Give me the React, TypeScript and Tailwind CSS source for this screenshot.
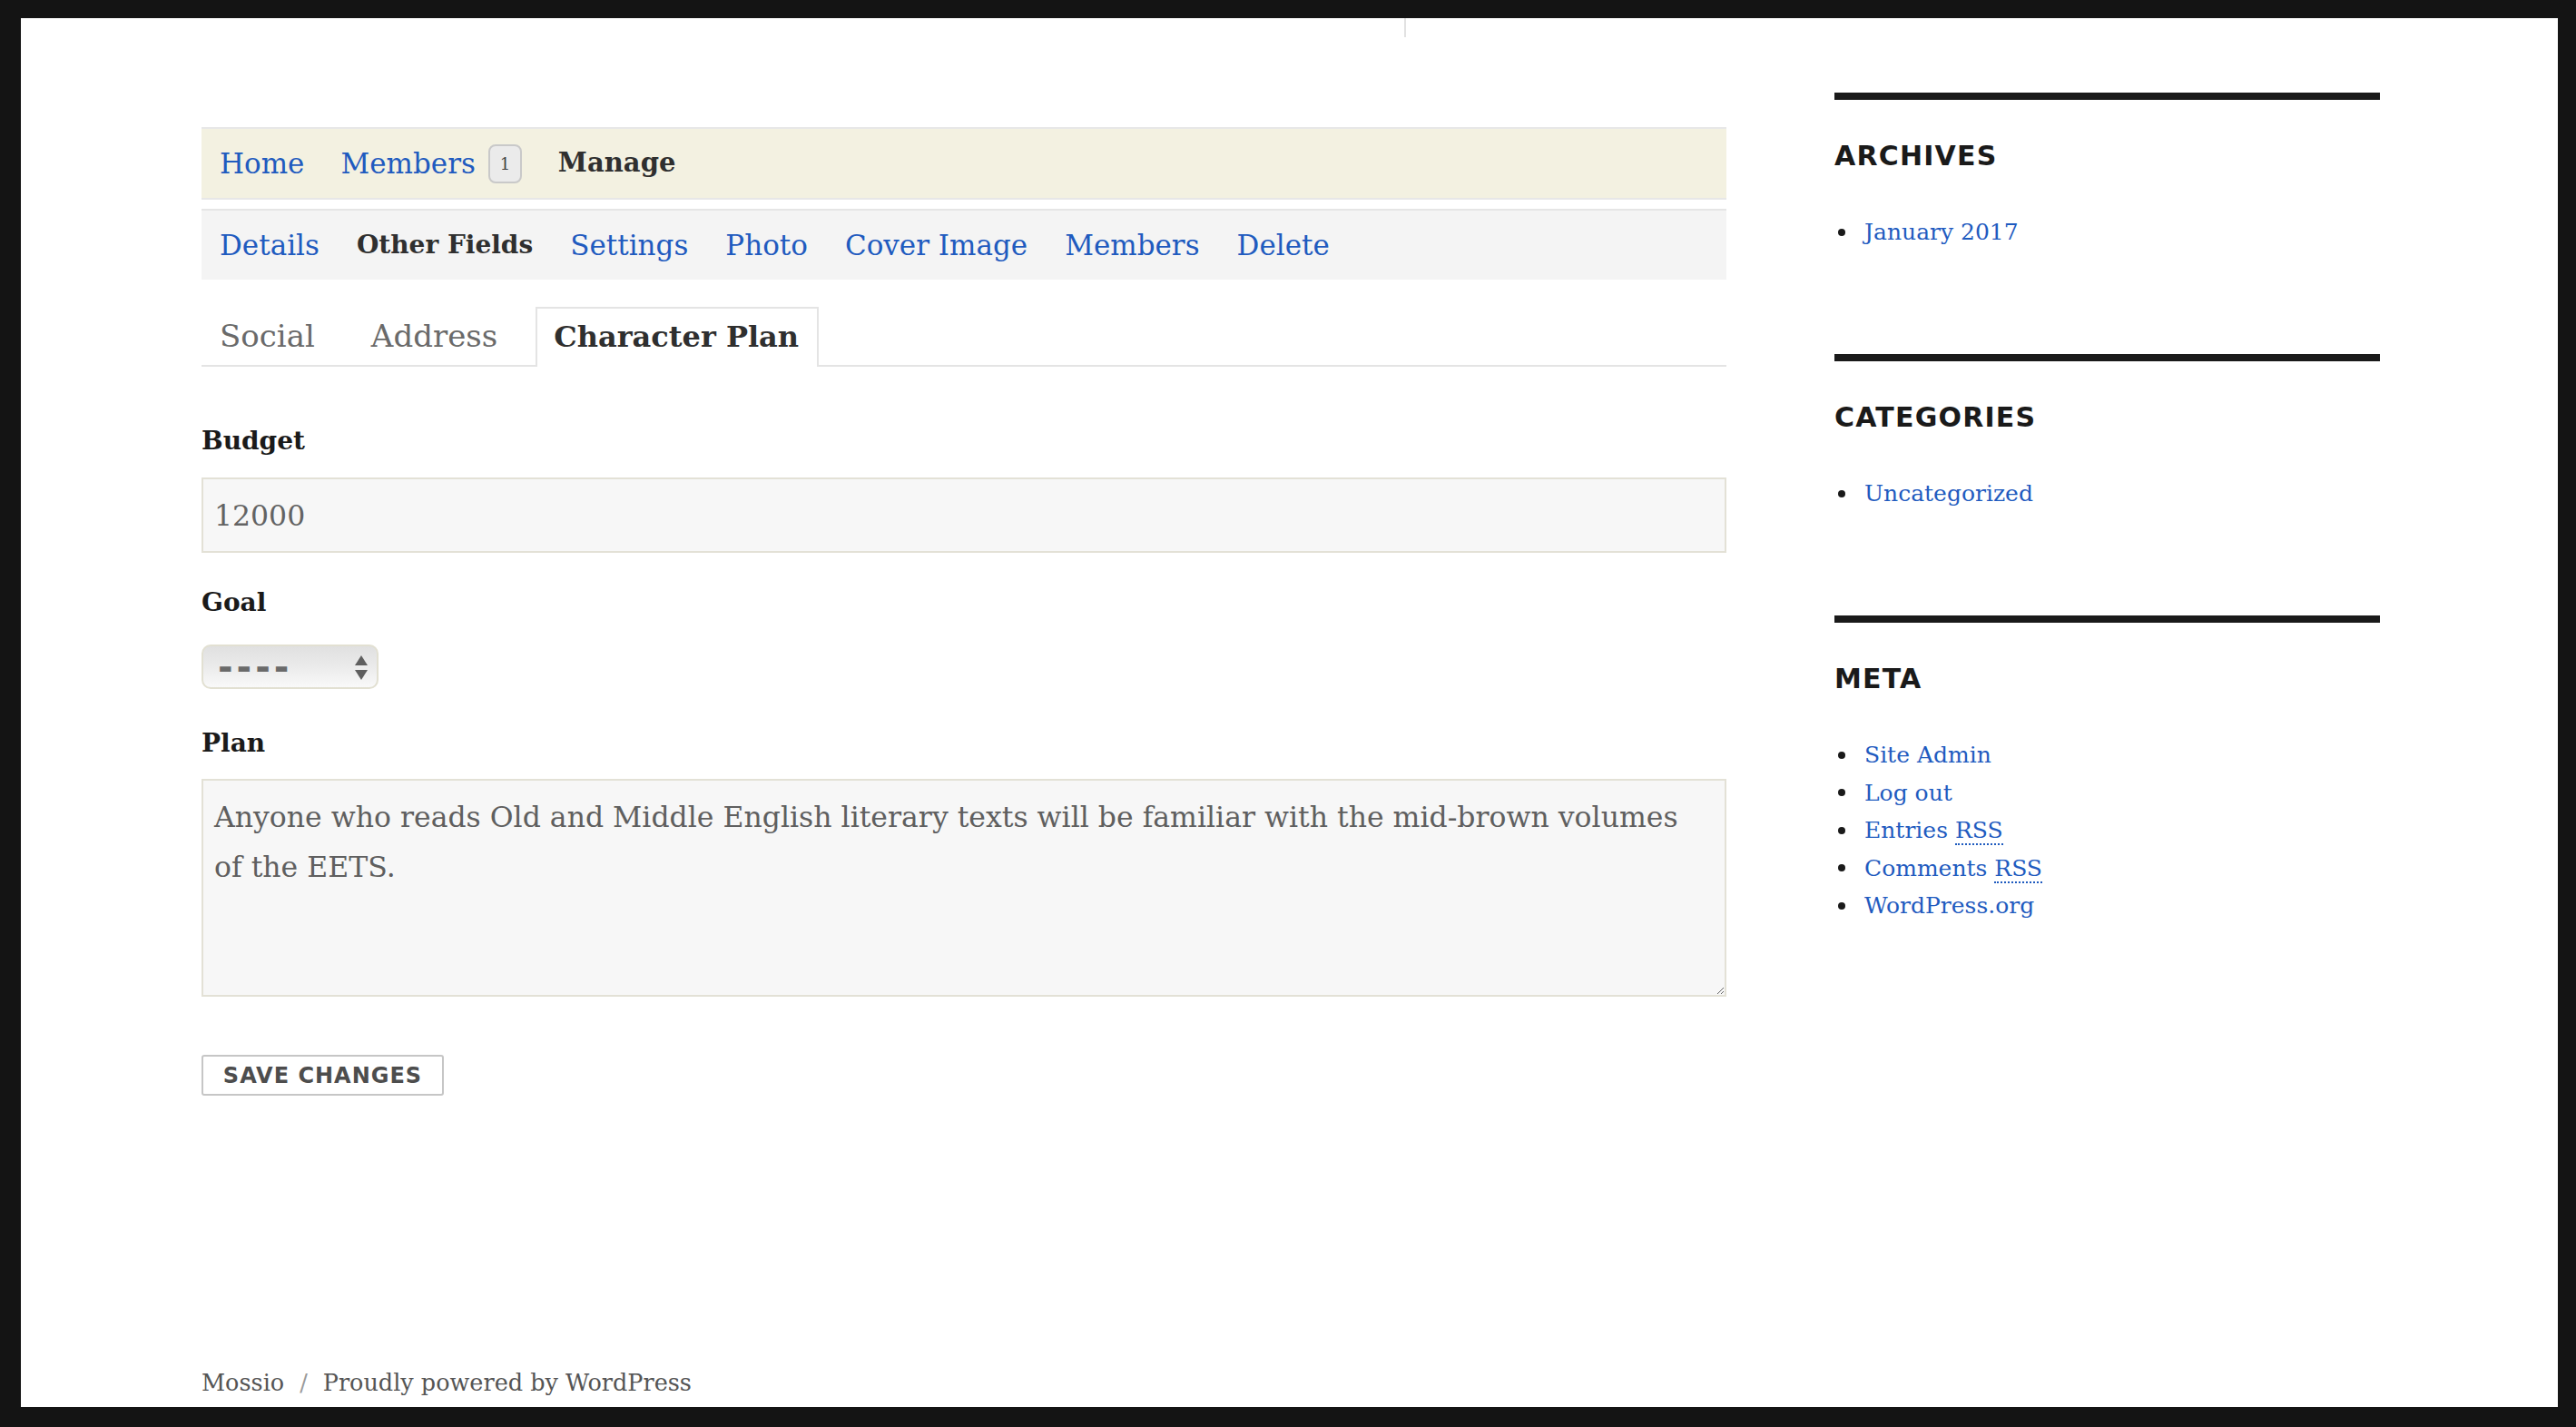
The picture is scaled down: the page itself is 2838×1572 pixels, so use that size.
import React from "react";

const blue = "text-[#1f5bbf]";

function Widget({ title, children, last }: { title: string; children: React.ReactNode; last?: boolean }) {
  return (
    <section className={last ? "" : "mb-[113.5px]"}>
      <div className="h-[8px] bg-[#1a1a1a]" />
      <h2 className="mt-[42px] h-[40px] leading-[40px] font-['DejaVu_Sans',sans-serif] font-bold text-[30px] tracking-[1.2px] text-[#1a1a1a] uppercase">
        {title}
      </h2>
      <ul className="mt-[43px]">{children}</ul>
    </section>
  );
}

function Item({ children }: { children: React.ReactNode }) {
  return (
    <li className="h-[41.5px] leading-[41.5px] flex items-center text-[25px]">
      <span className="ml-[4px] mr-[21px] w-[8px] h-[8px] rounded-full bg-[#1a1a1a] shrink-0" />
      <a className={blue} href="#">
        {children}
      </a>
    </li>
  );
}

export default function App() {
  return (
    <div className="w-[2838px] h-[1572px] bg-[#141414] pt-[20px] pl-[23px] pr-[20px] pb-[22px] font-['DejaVu_Serif',serif]">
      <div className="relative h-full bg-white flex flex-col">
        <div className="absolute left-[1524px] top-0 w-[2px] h-[21px] bg-[#e2e2e2]" />
        <div className="flex flex-1">
          <main className="ml-[199px] w-[1680px] pt-[120px]">
            <nav className="h-[80px] border-y-2 border-[#e7e7e7] bg-[#f3f1e1] flex items-center pl-[20px] gap-[40px] text-[31px]">
              <a href="#" className={blue}>Home</a>
              <span className="flex items-center">
                <a href="#" className={blue}>Members</a>
                <span className="ml-[14px] w-[37px] h-[43px] rounded-[8px] border-2 border-[#c9c9c9] bg-[#ebebeb] flex items-center justify-center text-[18px] text-[#444]">
                  1
                </span>
              </span>
              <span className="font-bold text-[29px] text-[#2f2f2f]">Manage</span>
            </nav>
            <nav className="mt-[10px] h-[78px] border-t-2 border-[#e5e5e5] bg-[#f4f4f4] flex items-center pl-[20px] gap-[41px] text-[31px]">
              <a href="#" className={blue}>Details</a>
              <span className="font-bold text-[28px] text-[#2f2f2f]">Other Fields</span>
              <a href="#" className={blue}>Settings</a>
              <a href="#" className={blue}>Photo</a>
              <a href="#" className={blue}>Cover Image</a>
              <a href="#" className={blue}>Members</a>
              <a href="#" className={blue}>Delete</a>
            </nav>
            <div className="mt-[30px] flex gap-[22px] border-b-2 border-[#e4e4e4] h-[66px]">
              <span className="h-[64px] px-[20px] flex items-center text-[34px] text-[#6a6a6a]">Social</span>
              <span className="h-[64px] px-[20px] flex items-center text-[34px] text-[#6a6a6a]">Address</span>
              <span className="h-[66px] pl-[18px] pr-[20px] border-2 border-b-0 border-[#e4e4e4] bg-white flex items-center pb-[2px] font-bold text-[32px] text-[#2f2f2f]">
                Character Plan
              </span>
            </div>

            <label className="block mt-[62px] h-[40px] leading-[40px] font-bold text-[28px] text-[#1a1a1a]">Budget</label>
            <input
              type="text"
              defaultValue="12000"
              className="mt-[20px] block w-full h-[83px] border-2 border-[#e3e1d6] bg-[#f7f7f7] px-[12px] text-[31.5px] text-[#636363] outline-none"
            />

            <label className="block mt-[35px] h-[40px] leading-[40px] font-bold text-[28px] text-[#1a1a1a]">Goal</label>
            <div className="relative mt-[26px] w-[195px] h-[49px]">
              <select className="appearance-none w-full h-full rounded-[10px] border-2 border-[#e2e0d2] bg-linear-to-b from-[#e0e0e0] via-[#ebebeb] to-[#f9f9f9] pl-[16px] font-['DejaVu_Sans',sans-serif] font-bold text-[40px] tracking-[4px] text-[#6a6a6a] leading-none outline-none">
                <option>----</option>
              </select>
              <svg className="absolute right-[11px] top-[12px] pointer-events-none" width="16" height="27" viewBox="0 0 16 27">
                <polygon points="8,0 15,11 1,11" fill="#5f5f5f" />
                <polygon points="1,16 15,16 8,27" fill="#5f5f5f" />
              </svg>
            </div>

            <label className="block mt-[40px] h-[40px] leading-[40px] font-bold text-[28px] text-[#1a1a1a]">Plan</label>
            <textarea
              defaultValue="Anyone who reads Old and Middle English literary texts will be familiar with the mid-brown volumes of the EETS."
              className="mt-[19px] block w-full h-[240px] border-2 border-[#e3e1d6] bg-[#f7f7f7] px-[12px] pt-[13px] text-[31.5px] leading-[55px] text-[#5f5f5f] outline-none"
            />

            <button className="mt-[64px] w-[267px] h-[45px] border-2 border-[#c6c6c6] rounded-[3px] bg-white font-['DejaVu_Sans',sans-serif] font-bold text-[24px] tracking-[1px] text-[#4d4d4d]">
              SAVE CHANGES
            </button>
          </main>

          <aside className="ml-[119px] w-[601px] pt-[82px]">
            <Widget title="Archives">
              <Item>January 2017</Item>
            </Widget>
            <Widget title="Categories">
              <Item>Uncategorized</Item>
            </Widget>
            <Widget title="Meta" last>
              <Item>Site Admin</Item>
              <Item>Log out</Item>
              <Item>
                Entries <span className="border-b-2 border-dotted border-[#1f5bbf]">RSS</span>
              </Item>
              <Item>
                Comments <span className="border-b-2 border-dotted border-[#1f5bbf]">RSS</span>
              </Item>
              <Item>WordPress.org</Item>
            </Widget>
          </aside>
        </div>
        <footer className="ml-[199px] mb-[7px] h-[40px] leading-[40px] flex items-center text-[25.5px] text-[#555]">
          <span>Mossio</span>
          <span className="mx-[17px] text-[#9a9a9a]">/</span>
          <span>Proudly powered by WordPress</span>
        </footer>
      </div>
    </div>
  );
}
